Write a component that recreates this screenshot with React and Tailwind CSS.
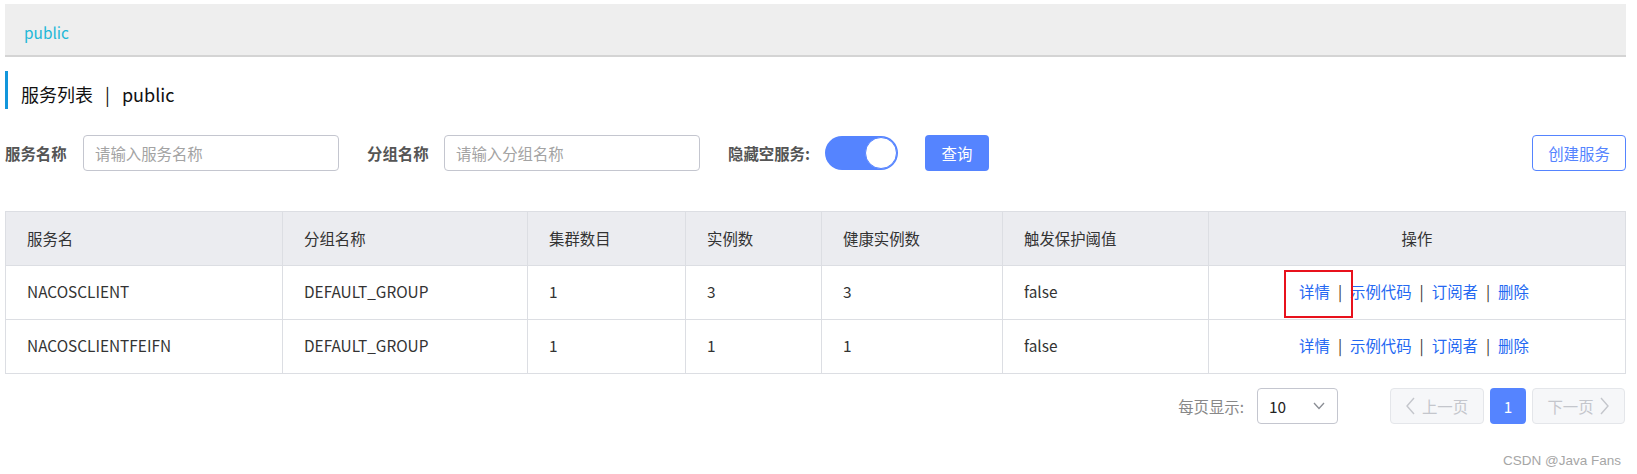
import { useState } from "react";

const columns = [
  { title: "服务名", width: 277 },
  { title: "分组名称", width: 245 },
  { title: "集群数目", width: 158 },
  { title: "实例数", width: 136 },
  { title: "健康实例数", width: 181 },
  { title: "触发保护阈值", width: 206 },
];

const services = [
  { name: "NACOSCLIENT", group: "DEFAULT_GROUP", clusters: 1, instances: 3, healthy: 3, threshold: "false" },
  { name: "NACOSCLIENTFEIFN", group: "DEFAULT_GROUP", clusters: 1, instances: 1, healthy: 1, threshold: "false" },
];

function Chevron({ dir }) {
  const pts = dir === "left" ? "8,1 1,9 8,17" : "1,1 8,9 1,17";
  return (
    <svg width="10" height="18" viewBox="0 0 10 18" fill="none" stroke="currentColor" strokeWidth="1.4">
      <polyline points={pts} />
    </svg>
  );
}

function Actions({ marked }) {
  const sep = <span className="mx-[8px] text-[#333]">|</span>;
  return (
    <div className="flex items-center justify-center pr-[6px] pb-[3px] text-[#2468f2]">
      <span className="relative">
        详情
        {marked && (
          <span className="absolute left-[-15px] top-[-10px] w-[69px] h-[48px] border-2 border-[#e8111c]" />
        )}
      </span>
      {sep}
      <span>示例代码</span>
      {sep}
      <span>订阅者</span>
      {sep}
      <span>删除</span>
    </div>
  );
}

export default function App() {
  const [hideEmpty, setHideEmpty] = useState(true);

  return (
    <div className="w-[1637px] h-[474px] bg-white pl-[5px] pr-[11px] pt-[4px] text-[15.4px] leading-[22px] text-[#333] font-['Noto_Sans_CJK_SC',sans-serif]">
      {/* breadcrumb bar */}
      <div className="h-[53px] bg-[#eeeeee] border-b-2 border-[#d4d4d4] flex items-center pl-[19px] pt-[5px] text-[#22b8d8]">
        public
      </div>

      {/* title */}
      <div className="mt-[14px] h-[38px] border-l-[3px] border-[#1296db] pl-[13px] pt-[11px] text-[18px] leading-[24px] text-[#111]">
        服务列表 <span className="mx-[8px]">|</span> public
      </div>

      {/* filters */}
      <div className="mt-[26px] h-[36px] flex items-center">
        <span className="w-[62px] mr-[16px] font-bold text-[#555] whitespace-nowrap">服务名称</span>
        <input
          className="w-[256px] h-[36px] border border-[#c4c6cf] rounded-[4px] px-[11px] outline-none placeholder:text-[#a3a3a3]"
          placeholder="请输入服务名称"
        />
        <span className="ml-[28px] w-[62px] mr-[15px] font-bold text-[#555] whitespace-nowrap">分组名称</span>
        <input
          className="w-[256px] h-[36px] border border-[#c4c6cf] rounded-[4px] px-[11px] outline-none placeholder:text-[#a3a3a3]"
          placeholder="请输入分组名称"
        />
        <span className="ml-[28px] w-[80px] mr-[17px] font-bold text-[#555] whitespace-nowrap">隐藏空服务:</span>
        <button
          onClick={() => setHideEmpty(!hideEmpty)}
          className={`w-[73px] h-[34px] rounded-full flex items-center px-[1px] ${hideEmpty ? "bg-[#5584ff] justify-end" : "bg-[#d8d8d8] justify-start"}`}
        >
          <span className="w-[32px] h-[32px] rounded-full bg-white border border-[#5584ff]" />
        </button>
        <button className="ml-[27px] w-[64px] h-[36px] rounded-[4px] bg-[#5584ff] text-white">查询</button>
        <button className="ml-auto w-[94px] h-[36px] rounded-[4px] border border-[#5584ff] text-[#5584ff]">创建服务</button>
      </div>

      {/* table */}
      <table className="mt-[40px] w-[1621px] table-fixed border-collapse border border-[#dcdee3]">
        <colgroup>
          {columns.map((c) => (
            <col key={c.title} style={{ width: c.width }} />
          ))}
          <col />
        </colgroup>
        <thead>
          <tr className="h-[54px] bg-[#ebecf0]">
            {columns.map((c) => (
              <th key={c.title} className="border border-[#dcdee3] pl-[21px] pb-[2px] text-left font-normal">
                {c.title}
              </th>
            ))}
            <th className="border border-[#dcdee3] pb-[2px] font-normal text-center">操作</th>
          </tr>
        </thead>
        <tbody>
          {services.map((s, i) => (
            <tr key={s.name} className="h-[54px]">
              <td className="border border-[#dcdee3] pl-[21px] pb-[3px]">{s.name}</td>
              <td className="border border-[#dcdee3] pl-[21px] pb-[3px]">{s.group}</td>
              <td className="border border-[#dcdee3] pl-[21px] pb-[3px]">{s.clusters}</td>
              <td className="border border-[#dcdee3] pl-[21px] pb-[3px]">{s.instances}</td>
              <td className="border border-[#dcdee3] pl-[21px] pb-[3px]">{s.healthy}</td>
              <td className="border border-[#dcdee3] pl-[21px] pb-[3px]">{s.threshold}</td>
              <td className="border border-[#dcdee3]">
                <Actions marked={i === 0} />
              </td>
            </tr>
          ))}
        </tbody>
      </table>

      {/* pagination */}
      <div className="mt-[14px] h-[36px] flex items-center justify-end">
        <span className="text-[#888] mr-[13px]">每页显示:</span>
        <div className="w-[81px] h-[36px] border border-[#c4c6cf] rounded-[4px] flex items-center justify-between pl-[11px] pr-[12px] text-[#222]">
          <span>10</span>
          <svg width="12" height="8" viewBox="0 0 12 8" fill="none" stroke="#8a8d94" strokeWidth="1.3">
            <polyline points="1,1 6,6.5 11,1" />
          </svg>
        </div>
        <button className="ml-[52px] w-[94px] h-[36px] rounded-[4px] bg-[#f6f7f9] border border-[#e4e6ea] text-[#c4c6cc] flex items-center justify-center gap-[6px]">
          <Chevron dir="left" />
          上一页
        </button>
        <button className="ml-[6px] w-[36px] h-[36px] rounded-[4px] bg-[#5584ff] text-white">1</button>
        <button className="ml-[6px] mr-[1px] w-[93px] h-[36px] rounded-[4px] bg-[#f6f7f9] border border-[#e4e6ea] text-[#c4c6cc] flex items-center justify-center gap-[6px]">
          下一页
          <Chevron dir="right" />
        </button>
      </div>

      {/* watermark */}
      <div className="mt-[28px] flex justify-end pr-[5px] text-[13.5px] leading-[18px] text-[#a6a6a6] font-['Liberation_Sans',sans-serif]">
        CSDN @Java Fans
      </div>
    </div>
  );
}
